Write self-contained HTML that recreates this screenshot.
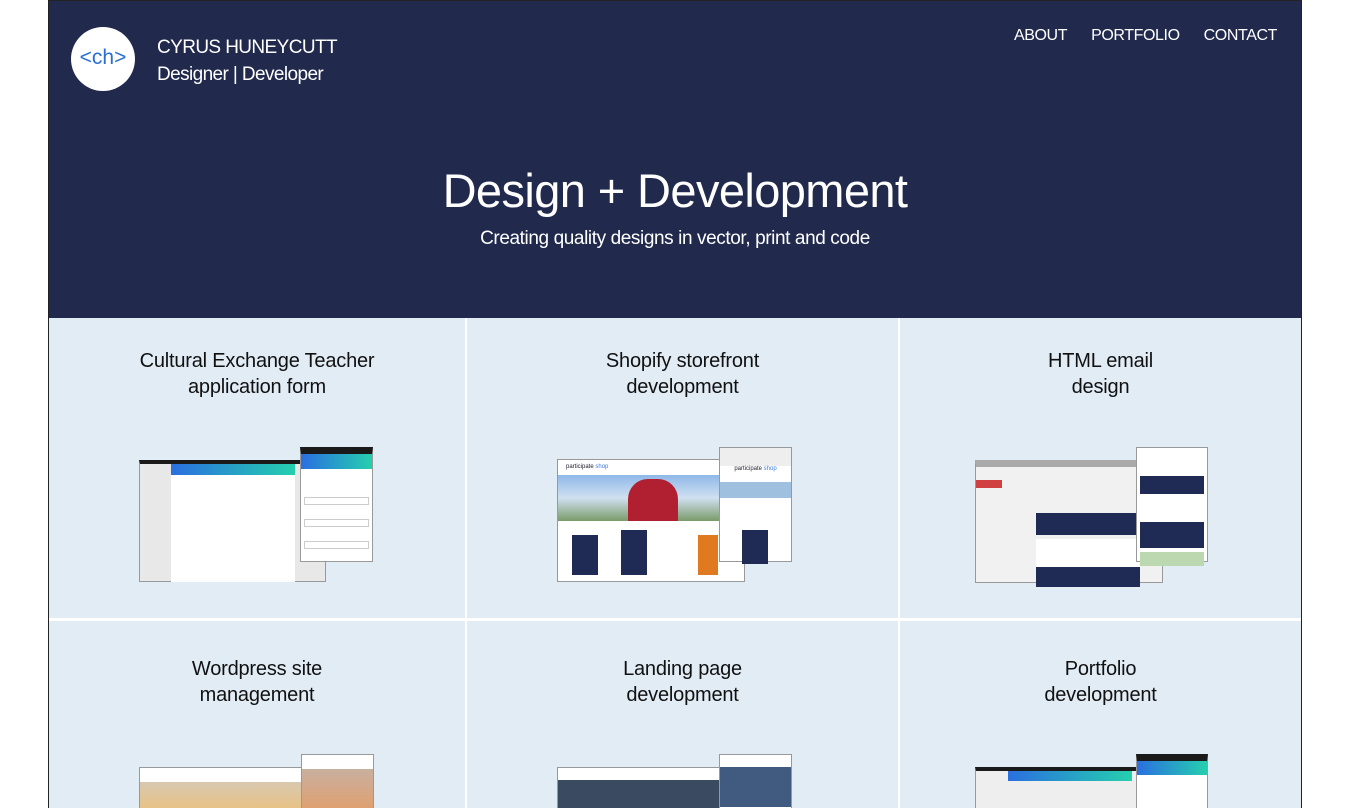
<!DOCTYPE html>
<html><head><meta charset="utf-8"><style>
*{margin:0;padding:0;box-sizing:border-box}
body{width:1350px;height:808px;background:#fff;font-family:"Liberation Sans",sans-serif;overflow:hidden;position:relative}
#wrap{position:absolute;left:48px;top:0;width:1254px;height:808px;border:1px solid #222;border-bottom:none;background:#fff;overflow:hidden}
header{position:absolute;left:0;top:0;width:1252px;height:317px;background:#212a4d;color:#fff}
.logo{position:absolute;left:22px;top:26px;width:64px;height:64px;border-radius:50%;background:#fff;color:#2a6fd6;font-size:21px;text-align:center;line-height:62px}
.name{position:absolute;left:108px;top:33px;font-size:19px;line-height:27px;letter-spacing:-0.6px}
nav{position:absolute;right:24px;top:26px;font-size:16px;letter-spacing:-0.4px}
nav span{margin-left:24px}
h1{position:absolute;left:0;width:100%;top:162px;text-align:center;font-weight:normal;font-size:47px;letter-spacing:-0.6px}
.sub{position:absolute;left:0;width:100%;top:227px;text-align:center;font-size:19px;letter-spacing:-0.4px}
.cell{position:absolute;background:#e2ecf5;overflow:hidden}
.cell h2{position:absolute;left:0;width:100%;top:30px;text-align:center;font-weight:normal;font-size:20px;line-height:26px;color:#111;letter-spacing:-0.2px}
.m{position:absolute;border:1px solid #999;background:#fff}
.grad{background:linear-gradient(90deg,#2a6fe0,#25cfae)}
</style></head><body><div id="wrap">
<header>
<div class="logo">&lt;ch&gt;</div>
<div class="name">CYRUS HUNEYCUTT<br>Designer | Developer</div>
<nav><span>ABOUT</span><span>PORTFOLIO</span><span>CONTACT</span></nav>
<h1>Design + Development</h1>
<div class="sub">Creating quality designs in vector, print and code</div>
</header>

<div class="cell" style="left:0;top:317px;width:416px;height:300px">
<h2>Cultural Exchange Teacher<br>application form</h2>
<div class="m" style="left:90px;top:142px;width:187px;height:122px;background:#e8e8e8;border-top:4px solid #1a1a1a">
<div style="position:absolute;left:31px;top:0;width:124px;height:118px;background:#fff"><div class="grad" style="height:11px"></div></div></div>
<div class="m" style="left:251px;top:129px;width:73px;height:115px;border-top:7px solid #1a1a1a"><div class="grad" style="height:15px"></div>
<div style="margin:28px 3px 0;height:8px;border:1px solid #ccc"></div><div style="margin:14px 3px 0;height:8px;border:1px solid #ccc"></div><div style="margin:14px 3px 0;height:8px;border:1px solid #ccc"></div></div>
</div>

<div class="cell" style="left:418px;top:317px;width:431px;height:300px">
<h2>Shopify storefront<br>development</h2>
<div class="m" style="left:90px;top:141px;width:188px;height:123px">
<div style="height:15px;font-size:6px;padding:4px 8px;color:#223">participate <span style="color:#3a7be0">shop</span></div>
<div style="height:46px;background:linear-gradient(180deg,#8fb8e8,#d0e0f0 50%,#7a9a6a);position:relative"><div style="position:absolute;left:70px;top:4px;width:50px;height:42px;background:#b02030;border-radius:20px 20px 0 0"></div></div>
<div style="position:absolute;left:14px;top:75px;width:26px;height:40px;background:#1f2a55"></div>
<div style="position:absolute;left:63px;top:70px;width:26px;height:45px;background:#1f2a55"></div>
<div style="position:absolute;left:140px;top:75px;width:20px;height:40px;background:#e07a20"></div></div>
<div class="m" style="left:252px;top:129px;width:73px;height:115px"><div style="height:18px;background:#eee"></div><div style="height:16px;font-size:6px;text-align:center;color:#223">participate <span style="color:#3a7be0">shop</span></div><div style="height:16px;background:#a0c0e0"></div>
<div style="margin:32px 0 0 22px;width:26px;height:34px;background:#1f2a55"></div></div>
</div>

<div class="cell" style="left:851px;top:317px;width:401px;height:300px">
<h2>HTML email<br>design</h2>
<div class="m" style="left:75px;top:142px;width:188px;height:123px;background:#f1f1f1;border-top:7px solid #aaa">
<div style="position:absolute;left:0;top:13px;width:26px;height:8px;background:#d04040"></div>
<div style="position:absolute;left:60px;top:46px;width:104px;height:22px;background:#1f2a55"></div>
<div style="position:absolute;left:60px;top:72px;width:104px;height:30px;background:#fff"></div>
<div style="position:absolute;left:60px;top:100px;width:104px;height:20px;background:#1f2a55"></div></div>
<div class="m" style="left:236px;top:129px;width:72px;height:115px">
<div style="margin:28px 3px 0;height:18px;background:#1f2a55"></div><div style="margin:28px 3px 0;height:26px;background:#1f2a55"></div><div style="margin:4px 3px 0;height:14px;background:#bcd8b0"></div></div>
</div>

<div class="cell" style="left:0;top:620px;width:416px;height:200px">
<h2 style="top:35px">Wordpress site<br>management</h2>
<div class="m" style="left:90px;top:146px;width:187px;height:60px"><div style="height:14px"></div><div style="height:40px;background:linear-gradient(180deg,#d8c8b0,#f0c070)"></div></div>
<div class="m" style="left:252px;top:133px;width:73px;height:60px"><div style="height:14px"></div><div style="height:40px;background:linear-gradient(180deg,#c8b0a0,#e0a070)"></div></div>
</div>

<div class="cell" style="left:418px;top:620px;width:431px;height:200px">
<h2 style="top:35px">Landing page<br>development</h2>
<div class="m" style="left:90px;top:146px;width:188px;height:60px"><div style="height:12px"></div><div style="height:40px;background:#3a4a60"></div></div>
<div class="m" style="left:252px;top:133px;width:73px;height:60px"><div style="height:12px"></div><div style="height:40px;background:#405a80"></div></div>
</div>

<div class="cell" style="left:851px;top:620px;width:401px;height:200px">
<h2 style="top:35px">Portfolio<br>development</h2>
<div class="m" style="left:75px;top:146px;width:188px;height:60px;border-top:4px solid #1a1a1a;background:#eee"><div class="grad" style="margin-left:32px;width:124px;height:10px"></div></div>
<div class="m" style="left:236px;top:133px;width:72px;height:60px;border-top:7px solid #1a1a1a"><div class="grad" style="height:14px"></div></div>
</div>
</div></body></html>
